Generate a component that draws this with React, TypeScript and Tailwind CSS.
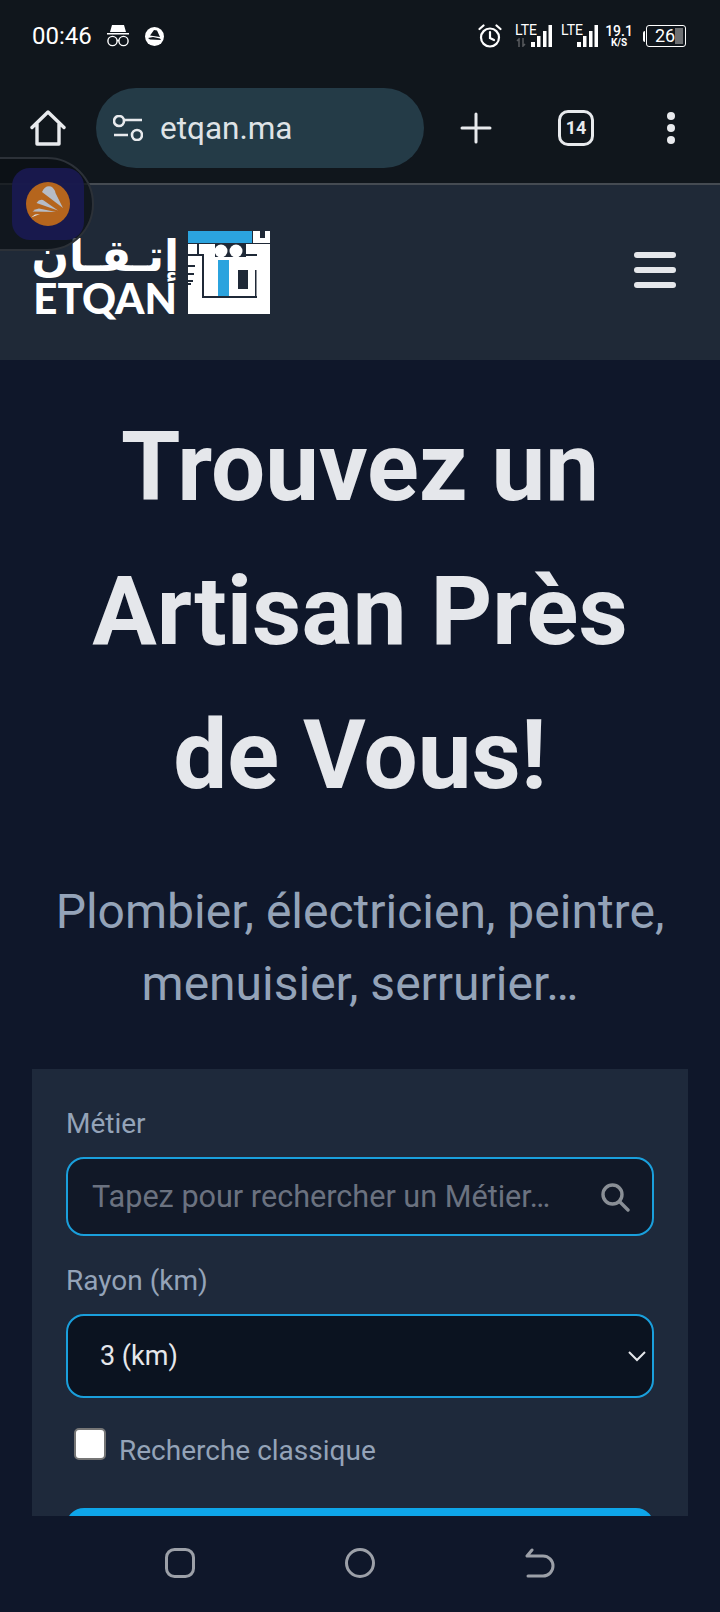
import React from "react";

function Signal() {
  return (
    <svg width="21" height="22" viewBox="0 0 21 22" fill="#fff" className="absolute right-0 top-0">
      <rect x="0" y="17" width="4" height="5" />
      <rect x="6" y="11" width="3.5" height="11" />
      <rect x="12" y="6" width="3.5" height="16" />
      <rect x="17.5" y="0" width="3.5" height="22" />
    </svg>
  );
}

function Lte({ arrows }: { arrows?: boolean }) {
  return (
    <div className="relative h-[22px] w-[37px] shrink-0">
      <span className="absolute left-0 top-[-2px] text-[14px] leading-[14px] text-white">LTE</span>
      {arrows && (
        <svg width="10" height="9" viewBox="0 0 10 9" fill="none" stroke="#55585c" strokeWidth="1.6" className="absolute left-[1px] top-[13px]">
          <path d="M3 9V1L1 3M7 0V8L9 6" />
        </svg>
      )}
      <Signal />
    </div>
  );
}

function Feathers() {
  return (
    <g fill="#b6bcc6">
      <path d="M15 4L-6 -12Q-3 -19 3 -17.5Q7 -15 7.5 -11Z" />
      <path d="M10 6.5L-11.5 -1Q-9 -5 -5 -4Z" />
      <path d="M8 8L-15.5 7.5Q-13 5 -9 4.5Z" />
      <path d="M-17 13.5L-13 10.5L-8 10Z" fill="#dfe1e4" />
    </g>
  );
}

function Logo() {
  return (
    <div className="flex h-[83px] items-start">
      <div className="flex h-[83px] w-[142px] flex-col items-end">
        <span
          dir="rtl"
          className="mr-[-2px] h-[52px] w-[146px] whitespace-nowrap text-center text-[44px] font-bold leading-[50px] text-white [font-family:'DejaVu_Sans',sans-serif]"
        >
          إتـقـان
        </span>
        <span className="h-[31px] whitespace-nowrap text-[42px] font-black leading-[31px] text-white [font-family:Lato,sans-serif]">
          ETQAN
        </span>
      </div>
      <svg width="82" height="83" viewBox="0 0 82 83" className="ml-[11px]">
        <rect x="0" y="0" width="64" height="12" fill="#2ba3de" />
        <path fill="#fff" d="M65 0H72V7H77V0H82V12H65Z" />
        <path fill="#fff" d="M0 13H82V83H0Z" />
        <rect x="9" y="13" width="2" height="10" fill="#1f2937" />
        <rect x="0" y="23" width="14" height="2" fill="#1f2937" />
        <rect x="14" y="23" width="2" height="43" fill="#1f2937" />
        <rect x="14" y="65" width="55" height="2" fill="#1f2937" />
        <path fill="#1f2937" d="M27 13H58V26H27Z" />
        <circle cx="33" cy="20" r="6.5" fill="#fff" />
        <circle cx="48" cy="20" r="6.5" fill="#fff" />
        <rect x="55" y="23" width="14" height="2" fill="#1f2937" />
        <rect x="30" y="29" width="11" height="36" fill="#2ba3de" />
        <rect x="50" y="39" width="10" height="19" fill="#1f2937" />
        <rect x="67" y="39" width="1.5" height="27" fill="#1f2937" />
        <path fill="#1f2937" d="M0 34H7V36H0ZM0 42H6V44H0ZM0 49H5V51H0ZM0 52H3V54H0Z" />
      </svg>
    </div>
  );
}

export default function App() {
  return (
    <div className="relative flex h-[1612px] w-[720px] flex-col overflow-hidden bg-[#0f172a] [font-family:Roboto,sans-serif]">
      {/* Browser chrome */}
      <div className="flex h-[185px] shrink-0 flex-col border-b-2 border-[#454b52] bg-[#10161c]">
        <div className="flex h-[72px] items-start justify-between pl-[32px] pr-[34px] pt-[20px]">
          <div className="flex items-center">
            <span className="text-[24px] leading-[32px] text-white">00:46</span>
            <svg width="24" height="22" viewBox="0 0 24 22" fill="none" stroke="#fff" strokeWidth="1.4" className="ml-[14px]">
              <path fill="#fff" stroke="none" d="M6 0H18L20 7H4ZM1 8H23V9.5H1Z" />
              <circle cx="6.5" cy="16" r="4.6" />
              <circle cx="17.5" cy="16" r="4.6" />
              <path d="M11 15.5H13" />
            </svg>
            <svg width="19" height="19" viewBox="0 0 19 19" className="ml-[15px]">
              <circle cx="9.5" cy="9.5" r="9.5" fill="#fff" />
              <path d="M5 8.5L9 3L12 3.5L15 10ZM3 11L8 10L15 11.5L16 13L5 12.5Z" fill="#10161c" />
            </svg>
          </div>
          <div className="flex items-start pt-[5px]">
            <svg width="24" height="24" viewBox="0 0 24 24" fill="none" stroke="#fff" strokeWidth="2.2" strokeLinecap="round" className="mt-[-1px]">
              <circle cx="12" cy="13.5" r="9" />
              <path d="M12 8V14L16 16M1.5 5L5.5 1.5M22.5 5L18.5 1.5" />
            </svg>
            <div className="ml-[13px]">
              <Lte arrows />
            </div>
            <div className="ml-[9px]">
              <Lte />
            </div>
            <div className="ml-[8px] flex w-[26px] flex-col items-center text-white">
              <span className="text-[14px] font-medium leading-[13px]">19.1</span>
              <span className="text-[10px] font-bold leading-[10px]">K/S</span>
            </div>
            <div className="ml-[11px] flex items-center">
              <span className="mr-[1px] h-[11px] w-[2px] rounded-l-[2px] bg-white" />
              <div className="relative flex h-[22px] w-[40px] items-center overflow-hidden rounded-[3px] border-[1.5px] border-white pl-[8px] text-[18px] leading-[18px] text-white">
                26
                <span className="absolute bottom-[2px] right-[2px] top-[2px] w-[8px] bg-[#6d6f72]" />
              </div>
            </div>
          </div>
        </div>
        <div className="flex flex-1 items-start pt-[16px]">
          <div className="flex w-[96px] justify-center pt-[22px]">
            <svg width="36" height="36" viewBox="0 0 36 36" fill="none" stroke="#e8eaed" strokeWidth="3.4" strokeLinejoin="round" strokeLinecap="round">
              <path d="M2 17.5L18 2L34 17.5M7 14V34H29V14" />
            </svg>
          </div>
          <div className="flex h-[80px] w-[328px] items-center rounded-full bg-[#243b47] pl-[17px] text-[31.5px] text-[#dfe3e6]">
            <svg width="30" height="26" viewBox="0 0 30 26" fill="none" stroke="#e8eaed" strokeWidth="2.6">
              <circle cx="6" cy="6" r="5" />
              <circle cx="24" cy="20" r="5" />
              <path d="M12 5H29M1 20H15" />
            </svg>
            <span className="ml-[17px] mt-[2px]">etqan.ma</span>
          </div>
          <div className="flex items-center pt-[22px]">
            <svg width="32" height="32" viewBox="0 0 32 32" stroke="#e8eaed" strokeWidth="3" strokeLinecap="round" className="ml-[36px]">
              <path d="M16 2V30M2 16H30" />
            </svg>
            <div className="ml-[66px] flex h-[36px] w-[36px] items-center justify-center rounded-[10px] border-[3.5px] border-[#e8eaed] text-[18px] font-bold leading-none text-[#e8eaed]">
              14
            </div>
            <div className="ml-[73px] flex flex-col gap-[4px]">
              <span className="h-[8px] w-[8px] rounded-full bg-[#e8eaed]" />
              <span className="h-[8px] w-[8px] rounded-full bg-[#e8eaed]" />
              <span className="h-[8px] w-[8px] rounded-full bg-[#e8eaed]" />
            </div>
          </div>
        </div>
      </div>

      {/* Site header */}
      <header className="flex h-[175px] shrink-0 items-center justify-between bg-[#1f2937] pl-[35px] pr-[44px]">
        <Logo />
        <div className="mb-[5px] flex flex-col gap-[9px]">
          <span className="h-[6px] w-[42px] rounded-[3px] bg-[#e5e7eb]" />
          <span className="h-[6px] w-[42px] rounded-[3px] bg-[#e5e7eb]" />
          <span className="h-[6px] w-[42px] rounded-[3px] bg-[#e5e7eb]" />
        </div>
      </header>

      {/* Main */}
      <main className="flex min-h-0 flex-1 flex-col items-center overflow-hidden px-[32px] pt-[35px]">
        <h1 className="w-full text-center text-[96px] font-bold leading-[144px] text-[#e5e7eb]">
          Trouvez un
          <br />
          Artisan Près
          <br />
          de Vous!
        </h1>
        <p className="mt-[49px] w-full text-center text-[48px] leading-[72px] text-[#94a3b8]">
          Plombier, électricien, peintre,
          <br />
          menuisier, serrurier…
        </p>
        <div className="mt-[49px] flex w-full shrink-0 flex-col bg-[#1e293b] px-[34px] pt-[34px]">
          <label className="text-[28px] leading-[42px] text-[#94a3b8]">Métier</label>
          <div className="mt-[12px] flex h-[79px] items-center justify-between rounded-[18px] border-2 border-[#1a9fdc] bg-[#111827] pl-[24px] pr-[22px]">
            <span className="text-[30.6px] text-[#6b7280]">Tapez pour rechercher un Métier…</span>
            <svg width="30" height="30" viewBox="0 0 30 30" fill="none" stroke="#8a8f96" strokeWidth="3.4" strokeLinecap="round">
              <circle cx="12.5" cy="12.5" r="9.5" />
              <path d="M19.5 19.5L28 28" />
            </svg>
          </div>
          <label className="mt-[24px] text-[28px] leading-[42px] text-[#94a3b8]">Rayon (km)</label>
          <div className="mt-[12px] flex h-[84px] items-center justify-between rounded-[18px] border-2 border-[#1a9fdc] bg-[#0b1320] pl-[32px] pr-[6px]">
            <span className="text-[27px] text-[#e5e7eb]">3 (km)</span>
            <svg width="18" height="12" viewBox="0 0 18 12" fill="none" stroke="#e5e7eb" strokeWidth="2">
              <path d="M1 2L9 10L17 2" />
            </svg>
          </div>
          <div className="mt-[30px] flex items-start pl-[8px]">
            <span className="h-[32px] w-[32px] shrink-0 rounded-[5px] border-2 border-[#767676] bg-white" />
            <span className="ml-[13px] mt-[2px] text-[28px] leading-[42px] text-[#94a3b8]">Recherche classique</span>
          </div>
          <div className="mt-[36px] h-[60px] rounded-[18px] bg-[#0ea5e9]" />
        </div>
      </main>

      {/* Android nav bar */}
      <nav className="flex h-[96px] shrink-0 items-start justify-center gap-[150px] bg-[#0f172a] pt-[32px]">
        <svg width="30" height="30" viewBox="0 0 30 30" fill="none" stroke="#9ca0a8" strokeWidth="3">
          <rect x="1.5" y="1.5" width="27" height="27" rx="8" />
        </svg>
        <svg width="30" height="30" viewBox="0 0 30 30" fill="none" stroke="#9ca0a8" strokeWidth="3">
          <circle cx="15" cy="15" r="13.5" />
        </svg>
        <svg width="30" height="30" viewBox="0 0 30 30" fill="none" stroke="#9ca0a8" strokeWidth="3" strokeLinecap="round" strokeLinejoin="round">
          <path d="M3 8H18A9.5 9.5 0 0 1 18 28H3M7 2L2 8" />
        </svg>
      </nav>

      {/* Floating bubble */}
      <div className="absolute left-[-48px] top-[157px] flex h-[94px] w-[142px] items-center justify-end rounded-[47px] border-2 border-[#2c3138] bg-[#0b0f14]/70 pr-[8px]">
        <div className="relative flex h-[72px] w-[72px] items-center justify-center rounded-[18px] bg-[#1a1a52]/90">
          <svg width="44" height="44" viewBox="-22 -22 44 44">
            <circle r="22" fill="#b5651d" />
            <Feathers />
          </svg>
        </div>
      </div>
    </div>
  );
}
